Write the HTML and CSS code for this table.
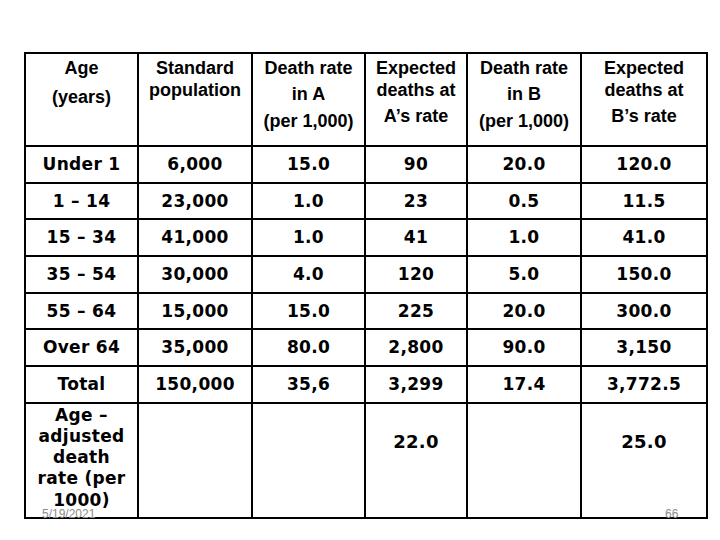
FILE: index.html
```html
<!DOCTYPE html>
<html>
<head>
<meta charset="utf-8">
<link rel="stylesheet" href="styles.css">
</head>
<body>
<div class="slide">
  <table class="rates">
    <colgroup>
      <col class="w1"><col class="w2"><col class="w3"><col class="w4"><col class="w5"><col class="w6">
    </colgroup>
    <thead>
      <tr class="head">
        <th><div>Age</div><div class="g7">(years)</div></th>
        <th><div>Standard</div><div>population</div></th>
        <th><div>Death rate</div><div class="g4">in A</div><div class="g5">(per 1,000)</div></th>
        <th><div>Expected</div><div>deaths at</div><div class="g4">A’s rate</div></th>
        <th><div>Death rate</div><div class="g4">in B</div><div class="g5">(per 1,000)</div></th>
        <th><div>Expected</div><div>deaths at</div><div class="g4">B’s rate</div></th>
      </tr>
    </thead>
    <tbody>
      <tr><td>Under 1</td><td>6,000</td><td>15.0</td><td>90</td><td>20.0</td><td>120.0</td></tr>
      <tr><td>1 – 14</td><td>23,000</td><td>1.0</td><td>23</td><td>0.5</td><td>11.5</td></tr>
      <tr><td>15 – 34</td><td>41,000</td><td>1.0</td><td>41</td><td>1.0</td><td>41.0</td></tr>
      <tr><td>35 – 54</td><td>30,000</td><td>4.0</td><td>120</td><td>5.0</td><td>150.0</td></tr>
      <tr><td>55 – 64</td><td>15,000</td><td>15.0</td><td>225</td><td>20.0</td><td>300.0</td></tr>
      <tr><td>Over 64</td><td>35,000</td><td>80.0</td><td>2,800</td><td>90.0</td><td>3,150</td></tr>
      <tr><td>Total</td><td>150,000</td><td>35,6</td><td>3,299</td><td>17.4</td><td>3,772.5</td></tr>
      <tr class="last">
        <td class="label">Age –<br>adjusted<br>death<br>rate (per<br>1000)</td>
        <td></td>
        <td></td>
        <td class="result">22.0</td>
        <td></td>
        <td class="result">25.0</td>
      </tr>
    </tbody>
  </table>
  <div class="date">5/19/2021</div>
  <div class="page">66</div>
</div>
</body>
</html>
```
FILE: styles.css
```css
body {
  margin: 0;
  background: #fff;
  font-family: "Liberation Sans", Arial, sans-serif;
  color: #000;
}

.slide {
  position: relative;
  width: 720px;
  height: 540px;
  padding: 52px 0 0 24px;
  box-sizing: border-box;
}

.rates {
  border-collapse: collapse;
  table-layout: fixed;
  width: 684px;
}

.w1 { width: 113px; }
.w2 { width: 114px; }
.w3 { width: 113px; }
.w4 { width: 102px; }
.w5 { width: 114px; }
.w6 { width: 126px; }

.rates th,
.rates td {
  border: 2px solid #000;
  padding: 0;
  text-align: center;
}

.rates th {
  vertical-align: top;
  font-family: "Liberation Sans", Arial, sans-serif;
  font-weight: bold;
  font-size: 18px;
  line-height: 22px;
  padding-top: 3px;
}

.head { height: 93px; }

.g4 { padding-top: 4px; }
.g5 { padding-top: 5px; }
.g7 { padding-top: 7px; }

.rates td {
  font-family: "DejaVu Sans", Verdana, sans-serif;
  font-weight: bold;
  font-size: 17px;
  line-height: 21px;
  letter-spacing: 0.3px;
  vertical-align: middle;
}

.rates tbody tr { height: 36.7px; }

.rates tr.last { height: 115px; }

.rates tr.last td { vertical-align: top; }

.rates td.label {
  line-height: 21.2px;
  padding-top: 1px;
}

.rates td.result {
  font-size: 18px;
  padding-top: 27px;
}

.date {
  position: absolute;
  left: 42px;
  top: 507px;
  font-size: 12px;
  color: #8c8c8c;
}

.page {
  position: absolute;
  left: 665px;
  top: 507px;
  font-size: 12px;
  color: #8c8c8c;
}
```
